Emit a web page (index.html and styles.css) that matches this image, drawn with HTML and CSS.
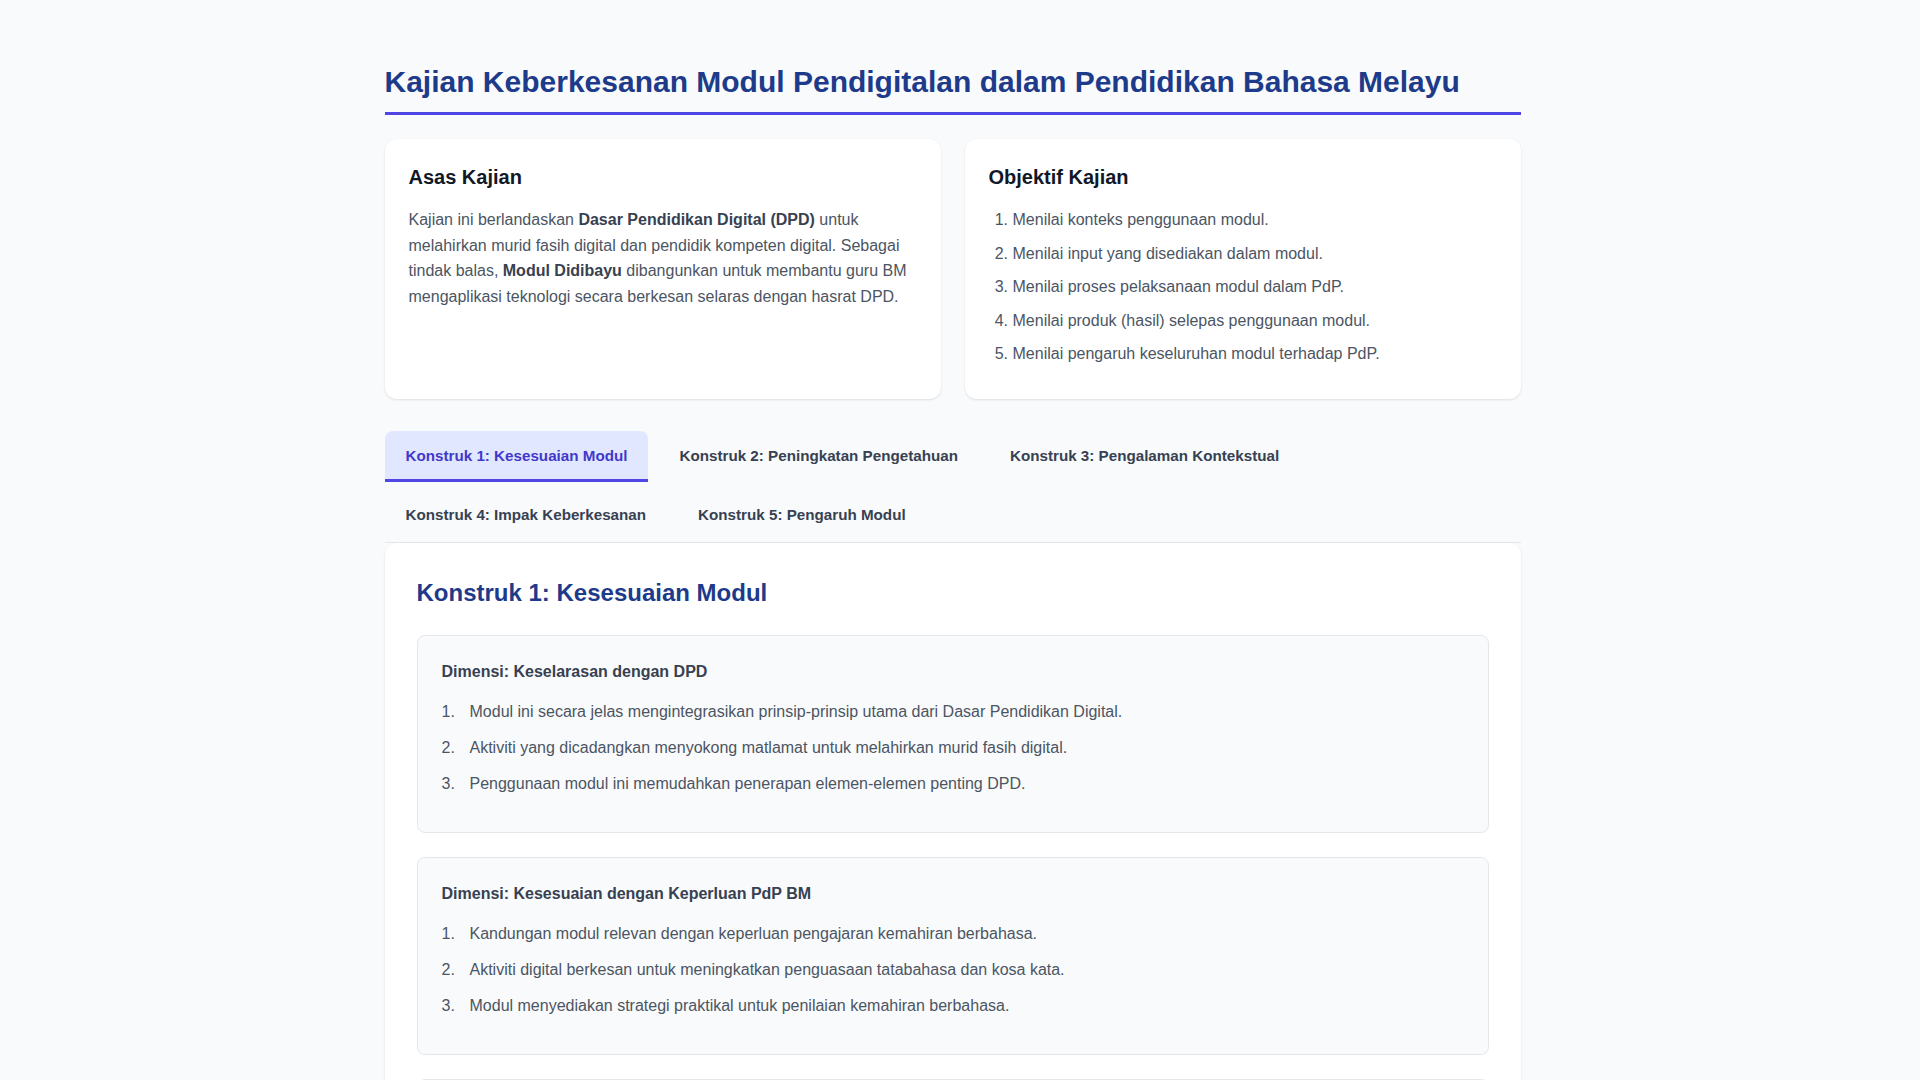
FILE: index.html
```html
<!DOCTYPE html>
<html lang="ms">
<head>
  <meta charset="UTF-8">
  <title>Kajian Keberkesanan Modul Pendigitalan</title>
  <link rel="stylesheet" href="styles.css">
</head>
<body>
  <div class="container">
    <h1 class="page-title">Kajian Keberkesanan Modul Pendigitalan dalam Pendidikan Bahasa Melayu</h1>

    <div class="intro-grid">
      <div class="intro-card">
        <h2>Asas Kajian</h2>
        <p>Kajian ini berlandaskan <strong>Dasar Pendidikan Digital (DPD)</strong> untuk melahirkan murid fasih digital dan pendidik kompeten digital. Sebagai tindak balas, <strong>Modul Didibayu</strong> dibangunkan untuk membantu guru BM mengaplikasi teknologi secara berkesan selaras dengan hasrat DPD.</p>
      </div>

      <div class="intro-card">
        <h2>Objektif Kajian</h2>
        <ol class="objective-list">
          <li>Menilai konteks penggunaan modul.</li>
          <li>Menilai input yang disediakan dalam modul.</li>
          <li>Menilai proses pelaksanaan modul dalam PdP.</li>
          <li>Menilai produk (hasil) selepas penggunaan modul.</li>
          <li>Menilai pengaruh keseluruhan modul terhadap PdP.</li>
        </ol>
      </div>
    </div>

    <div class="tabs">
      <button class="tab active">Konstruk 1: Kesesuaian Modul</button>
      <button class="tab">Konstruk 2: Peningkatan Pengetahuan</button>
      <button class="tab">Konstruk 3: Pengalaman Kontekstual</button>
      <button class="tab">Konstruk 4: Impak Keberkesanan</button>
      <button class="tab">Konstruk 5: Pengaruh Modul</button>
    </div>

    <div class="tab-panel">
      <h2 class="panel-title">Konstruk 1: Kesesuaian Modul</h2>

      <div class="dimension">
        <h3>Dimensi: Keselarasan dengan DPD</h3>
        <ol class="item-list">
          <li><span class="num">1.</span>Modul ini secara jelas mengintegrasikan prinsip-prinsip utama dari Dasar Pendidikan Digital.</li>
          <li><span class="num">2.</span>Aktiviti yang dicadangkan menyokong matlamat untuk melahirkan murid fasih digital.</li>
          <li><span class="num">3.</span>Penggunaan modul ini memudahkan penerapan elemen-elemen penting DPD.</li>
        </ol>
      </div>

      <div class="dimension">
        <h3>Dimensi: Kesesuaian dengan Keperluan PdP BM</h3>
        <ol class="item-list">
          <li><span class="num">1.</span>Kandungan modul relevan dengan keperluan pengajaran kemahiran berbahasa.</li>
          <li><span class="num">2.</span>Aktiviti digital berkesan untuk meningkatkan penguasaan tatabahasa dan kosa kata.</li>
          <li><span class="num">3.</span>Modul menyediakan strategi praktikal untuk penilaian kemahiran berbahasa.</li>
        </ol>
      </div>

      <div class="dimension">
        <h3>Dimensi: Kebolehgunaan Modul</h3>
        <ol class="item-list">
          <li><span class="num">1.</span>Arahan dalam modul mudah difahami dan diikuti oleh guru.</li>
          <li><span class="num">2.</span>Bahan digital dalam modul mudah diakses dan digunakan.</li>
          <li><span class="num">3.</span>Modul sesuai digunakan mengikut masa dan kemudahan sekolah.</li>
        </ol>
      </div>
    </div>
  </div>
</body>
</html>
```

FILE: styles.css
```css
* {
  margin: 0;
  padding: 0;
  box-sizing: border-box;
}

body {
  font-family: 'Liberation Sans', Arial, sans-serif;
  background: #f8fafc;
  color: #4b5563;
  font-size: 16px;
  line-height: 1.6;
  padding-right: 15px;
}

.container {
  max-width: 1200px;
  margin: 0 auto;
  padding: 64px 32px 48px;
}

.page-title {
  font-size: 30px;
  line-height: 36px;
  font-weight: 700;
  color: #1e3a8a;
  padding-bottom: 12px;
  border-bottom: 3px solid #4f46e5;
  margin-bottom: 24px;
}

.intro-grid {
  display: grid;
  grid-template-columns: 1fr 1fr;
  gap: 24px;
  margin-bottom: 32px;
}

.intro-card {
  background: #ffffff;
  border-radius: 12px;
  padding: 24px;
  box-shadow: 0 1px 3px rgba(0, 0, 0, 0.08), 0 1px 2px rgba(0, 0, 0, 0.04);
}

.intro-card h2 {
  font-size: 20px;
  line-height: 28px;
  font-weight: 700;
  color: #111827;
  margin-bottom: 16px;
}

.intro-card strong {
  color: #374151;
}

.objective-list {
  padding-left: 24px;
}

.objective-list li {
  margin-bottom: 8px;
}

.tabs {
  display: flex;
  flex-wrap: wrap;
  gap: 8px 10px;
  border-bottom: 1px solid #e5e7eb;
}

.tab {
  font-family: inherit;
  font-size: 15.2px;
  line-height: 1.6;
  font-weight: 700;
  color: #374151;
  background: transparent;
  border: none;
  border-bottom: 3px solid transparent;
  border-radius: 8px 8px 0 0;
  padding: 13px 21px 11px;
  cursor: pointer;
}

.tab:hover {
  color: #4338ca;
}

.tab.active {
  background: #e0e7ff;
  color: #4338ca;
  border-bottom-color: #4f46e5;
}

.tab-panel {
  background: #ffffff;
  border-radius: 12px;
  padding: 32px;
  box-shadow: 0 1px 3px rgba(0, 0, 0, 0.08), 0 1px 2px rgba(0, 0, 0, 0.04);
}

.panel-title {
  font-size: 24px;
  line-height: 36px;
  font-weight: 700;
  color: #1e3a8a;
  margin-bottom: 24px;
}

.dimension {
  background: #f9fafb;
  border: 1px solid #e5e7eb;
  border-radius: 8px;
  padding: 24px;
  margin-bottom: 24px;
}

.dimension h3 {
  font-size: 16px;
  line-height: 24px;
  font-weight: 700;
  color: #374151;
  margin-bottom: 16px;
}

.item-list {
  list-style: none;
}

.item-list li {
  display: flex;
  line-height: 24px;
  margin-bottom: 12px;
}

.item-list .num {
  width: 28px;
  flex-shrink: 0;
}
```
